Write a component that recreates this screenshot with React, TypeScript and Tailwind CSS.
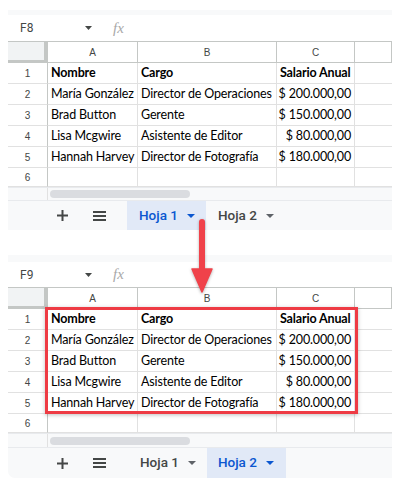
import React from "react";

const data = [
  ["Nombre", "Cargo", "Salario Anual"],
  ["María González", "Director de Operaciones", "$ 200.000,00"],
  ["Brad Button", "Gerente", "$ 150.000,00"],
  ["Lisa Mcgwire", "Asistente de Editor", "$ 80.000,00"],
  ["Hannah Harvey", "Director de Fotografía", "$ 180.000,00"],
];

const cellFont = { fontFamily: "Lato, 'Liberation Sans', sans-serif" };
const uiFont = { fontFamily: "Roboto, 'Liberation Sans', sans-serif" };
const hdrFont = { fontFamily: "'Liberation Sans', Arial, sans-serif" };

function Caret({ color }: { color: string }) {
  return (
    <svg width="8" height="4" viewBox="0 0 8 4" className="shrink-0">
      <path d="M0 0 L8 0 L4 4 Z" fill={color} />
    </svg>
  );
}

function Tab({ label, active }: { label: string; active: boolean }) {
  return (
    <div
      className={
        "flex items-center h-full gap-[9px] " +
        (active ? "text-[#0b57d0]" : "text-[#444746]")
      }
      style={{ ...uiFont }}
    >
      <span className="text-[13.5px] font-medium leading-none">{label}</span>
      <Caret color={active ? "#0b57d0" : "#5f6368"} />
    </div>
  );
}

function Sheet({
  cellRef,
  active,
  selected,
  stripH,
  formulaH,
  scrollH,
  tabsH,
}: {
  cellRef: string;
  active: 1 | 2;
  selected: boolean;
  stripH: string;
  formulaH: string;
  scrollH: string;
  tabsH: string;
}) {
  return (
    <div className={"w-[384px] bg-white overflow-hidden " + (selected ? "rounded-bl-[7px]" : "")}>
      <div className={"bg-[#f8f9fa] " + stripH} />
      <div className={"flex items-center " + formulaH} style={uiFont}>
        <span className="ml-[12px] w-[65px] text-[12px] text-[#444746]">{cellRef}</span>
        <svg width="7" height="4" viewBox="0 0 7 4">
          <path d="M0 0 L7 0 L3.5 4 Z" fill="#444746" />
        </svg>
        <span
          className="ml-[21px] text-[15px] italic text-[#a8a8a8] leading-none"
          style={{ fontFamily: "'Liberation Serif', serif" }}
        >
          fx
        </span>
      </div>
      {/* column header */}
      <div className="grid grid-cols-[40px_90px_139px_78px_37px] h-[22px] border-t border-[#c4c7c5]">
        <div className="bg-[#f1f3f4] border-r-4 border-b-[3px] border-[#c4c7c5]" />
        {["A", "B", "C", ""].map((c, i) => (
          <div
            key={i}
            className="flex items-center justify-center border-r border-b border-[#c4c7c5] text-[10px] text-[#444746]"
            style={hdrFont}
          >
            {c}
          </div>
        ))}
      </div>
      <div className="relative">
        {data.map((r, ri) => (
          <div key={ri} className="grid grid-cols-[40px_90px_139px_78px_37px] h-[21px]">
            <div
              className="flex items-center justify-center border-r border-r-[#c4c7c5] border-b border-b-[#e1e1e1] text-[10px] text-[#444746]"
              style={hdrFont}
            >
              {ri + 1}
            </div>
            {r.map((v, ci) => (
              <div
                key={ci}
                className={
                  "flex items-center border-r border-b border-[#e1e1e1] text-[12.5px] tracking-[-0.15px] text-black whitespace-nowrap overflow-hidden " +
                  (ci === 2 && ri > 0 ? "justify-end pr-[3px]" : "pl-[3px]") +
                  (ri === 0 ? " font-bold" : "")
                }
                style={cellFont}
              >
                {v}
              </div>
            ))}
            <div className="border-b border-[#e1e1e1]" />
          </div>
        ))}
        {selected && (
          <div className="absolute left-[37px] top-[-2px] w-[313px] h-[107px] border-[3px] border-[#ee3b44] shadow-[0_1px_4px_rgba(0,0,0,0.25)] pointer-events-none" />
        )}
      </div>
      <div className="grid grid-cols-[40px_90px_139px_78px_37px] h-[19px]">
        <div
          className="flex items-center justify-center border-r border-r-[#c4c7c5] border-b border-b-[#e1e1e1] text-[10px] text-[#444746]"
          style={hdrFont}
        >
          6
        </div>
        <div className="border-r border-b border-[#e1e1e1]" />
        <div className="border-r border-b border-[#e1e1e1]" />
        <div className="border-r border-b border-[#e1e1e1]" />
        <div className="border-b border-[#e1e1e1]" />
      </div>
      {/* scrollbar */}
      <div className={"flex bg-[#f8f9fa] border-t border-[#e8eaed] " + scrollH}>
        <div className="w-[40px] border-r border-[#e1e1e1]" />
        <div className="flex items-center pl-[2px]">
          <div className="w-[140px] h-[8px] rounded-full bg-[#dadce0]" />
        </div>
      </div>
      {/* tabs */}
      <div className={"flex items-center bg-[#f8f9fa] border-t border-[#e8eaed] " + tabsH}>
        <div className="w-[119px] h-full flex items-center">
          <svg width="11" height="11" viewBox="0 0 11 11" className="ml-[49px]">
            <rect x="4.5" y="0" width="2" height="11" fill="#444746" />
            <rect x="0" y="4.5" width="11" height="2" fill="#444746" />
          </svg>
          <svg width="13" height="10" viewBox="0 0 13 10" className="ml-[25px]">
            <rect x="0" y="0" width="13" height="2" fill="#444746" />
            <rect x="0" y="4" width="13" height="2" fill="#444746" />
            <rect x="0" y="8" width="13" height="2" fill="#444746" />
          </svg>
        </div>
        <div className="flex h-full">
          <div className={"h-full flex " + (active === 1 ? "bg-[#e1e9f7] pl-[12px] pr-[11px]" : "pl-[13px] pr-[11px]")}>
            <Tab label="Hoja 1" active={active === 1} />
          </div>
          <div className={"h-full flex " + (active === 2 ? "bg-[#e1e9f7] pl-[11px] pr-[12px]" : "pl-[12px] pr-[11px]")}>
            <Tab label="Hoja 2" active={active === 2} />
          </div>
        </div>
      </div>
    </div>
  );
}

export default function App() {
  return (
    <div className="relative w-[404px] h-[501px] bg-white pl-[8px] pt-[10px]">
      <Sheet
        cellRef="F8"
        active={1}
        selected={false}
        stripH="h-[5px]"
        formulaH="h-[26px]"
        scrollH="h-[13px]"
        tabsH="h-[30px]"
      />
      <div className="h-[25px]" />
      <Sheet
        cellRef="F9"
        active={2}
        selected={true}
        stripH="h-[7px]"
        formulaH="h-[25px]"
        scrollH="h-[14px]"
        tabsH="h-[31px]"
      />
      <svg
        className="absolute left-[190px] top-[216px]"
        width="24"
        height="80"
        viewBox="0 0 24 80"
        style={{ filter: "drop-shadow(0 1px 1.5px rgba(0,0,0,0.3))" }}
      >
        <line x1="12" y1="6" x2="12" y2="58" stroke="#f0424a" strokeWidth="6" strokeLinecap="round" />
        <path d="M2 53 L22 53 L12 76 Z" fill="#f0424a" stroke="#f0424a" strokeWidth="1.5" strokeLinejoin="round" />
      </svg>
    </div>
  );
}
